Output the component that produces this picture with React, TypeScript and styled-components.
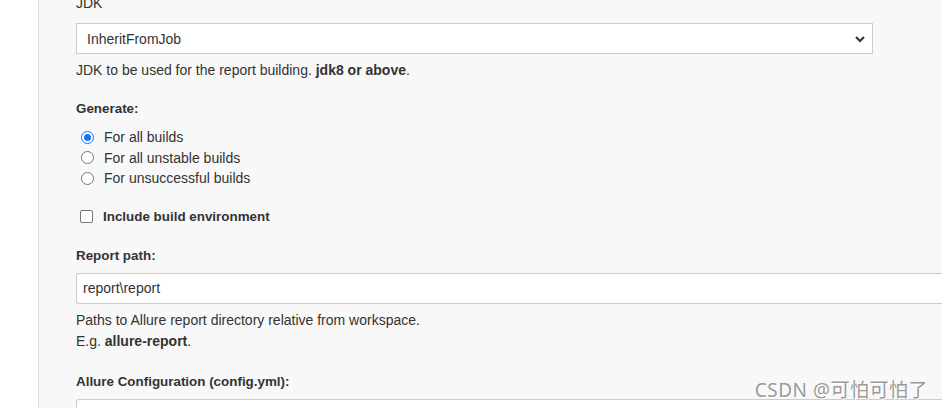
import React from "react";
import styled, { createGlobalStyle } from "styled-components";

const GlobalStyle = createGlobalStyle`
  html, body {
    margin: 0;
    padding: 0;
    background: #ffffff;
    overflow: hidden;
  }
  body {
    font-family: "Liberation Sans", Arial, sans-serif;
    font-size: 14px;
    color: #333333;
  }
`;

const Page = styled.div`
  display: flex;
  width: 942px;
  height: 408px;
  overflow: hidden;
`;

const Gutter = styled.div`
  width: 38px;
  flex-shrink: 0;
  background: #ffffff;
  border-right: 1px solid #dcdcdc;
`;

const Panel = styled.div`
  flex: 1;
  background: #f8f8f8;
  padding: 0 0 0 37px;
  display: flex;
  flex-direction: column;
  margin-top: -6px;
`;

const Section = styled.div<{ gap?: number }>`
  display: flex;
  flex-direction: column;
  margin-bottom: ${({ gap }) => gap ?? 0}px;
`;

const Label = styled.div<{ weight?: number; space?: number }>`
  font-weight: ${({ weight }) => weight ?? 700};
  font-size: ${({ weight }) => (weight === 400 ? 14 : 13.4)}px;
  line-height: 18px;
  color: #333;
  margin-bottom: ${({ space }) => space ?? 8}px;
`;

const Select = styled.div`
  box-sizing: border-box;
  width: 797px;
  height: 31px;
  background: #ffffff;
  border: 1px solid #cccccc;
  display: flex;
  align-items: center;
  justify-content: space-between;
  padding: 0 6px 0 10px;
  font-size: 14px;
`;

const TextInput = styled.div`
  box-sizing: border-box;
  width: 900px;
  height: 31px;
  background: #ffffff;
  border: 1px solid #cccccc;
  border-right: none;
  border-radius: 3px 0 0 3px;
  display: flex;
  align-items: center;
  padding-left: 6px;
  font-size: 14px;
`;

const Help = styled.div`
  margin-top: 6px;
  line-height: 21px;
  font-size: 14px;
  color: #333;
`;

const OptionList = styled.div`
  display: flex;
  flex-direction: column;
  padding-left: 5px;
`;

const Option = styled.label`
  display: flex;
  align-items: center;
  height: 20.5px;
  font-size: 14px;
  gap: 10px;
`;

const Radio = styled.span<{ checked?: boolean }>`
  box-sizing: border-box;
  width: 13px;
  height: 13px;
  border-radius: 50%;
  border: 1px solid ${({ checked }) => (checked ? "#1a73e8" : "#767676")};
  background: #fff;
  display: flex;
  align-items: center;
  justify-content: center;
  &::after {
    content: "";
    width: 7px;
    height: 7px;
    border-radius: 50%;
    background: ${({ checked }) => (checked ? "#1a73e8" : "transparent")};
  }
`;

const CheckRow = styled.label`
  display: flex;
  align-items: center;
  gap: 10px;
  padding-left: 4px;
  font-size: 13.4px;
  font-weight: 700;
  height: 20px;
`;

const Checkbox = styled.span`
  box-sizing: border-box;
  width: 13px;
  height: 13px;
  border: 1px solid #767676;
  border-radius: 2px;
  background: #fff;
`;

const Watermark = styled.div`
  position: absolute;
  right: 14px;
  bottom: 5px;
  font-family: "Noto Sans", "Noto Sans CJK SC", sans-serif;
  font-size: 19px;
  color: #9a9a9a;
  text-shadow: 1px 1px 0 #ffffff;
  letter-spacing: 0.5px;
`;

const Wrap = styled.div`
  position: relative;
`;

function Chevron() {
  return (
    <svg width="12" height="8" viewBox="0 0 12 8">
      <path d="M2 2 L6 6 L10 2" stroke="#333" strokeWidth="2" fill="none" />
    </svg>
  );
}

export default function App() {
  return (
    <Wrap>
      <GlobalStyle />
      <Page>
        <Gutter />
        <Panel>
          <Section gap={19}>
            <Label weight={400} space={11}>
              JDK
            </Label>
            <Select>
              <span>InheritFromJob</span>
              <Chevron />
            </Select>
            <Help>
              JDK to be used for the report building. <b>jdk8 or above</b>.
            </Help>
          </Section>
          <Section gap={18}>
            <Label space={9}>Generate:</Label>
            <OptionList>
              <Option>
                <Radio checked />
                For all builds
              </Option>
              <Option>
                <Radio />
                For all unstable builds
              </Option>
              <Option>
                <Radio />
                For unsuccessful builds
              </Option>
            </OptionList>
          </Section>
          <Section gap={20}>
            <CheckRow>
              <Checkbox />
              Include build environment
            </CheckRow>
          </Section>
          <Section gap={21}>
            <Label>Report path:</Label>
            <TextInput>report\report</TextInput>
            <Help>
              Paths to Allure report directory relative from workspace.
              <br />
              E.g. <b>allure-report</b>.
            </Help>
          </Section>
          <Section>
            <Label>Allure Configuration (config.yml):</Label>
            <TextInput />
          </Section>
        </Panel>
      </Page>
      <Watermark>CSDN @可怕可怕了</Watermark>
    </Wrap>
  );
}
